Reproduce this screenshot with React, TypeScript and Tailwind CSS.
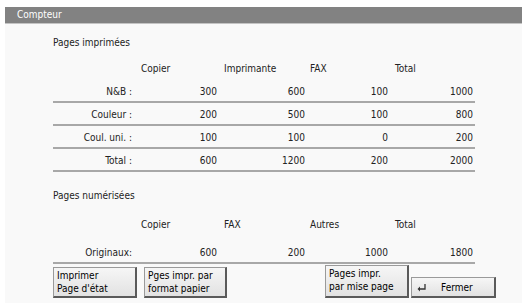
import React from 'react';

const font = { fontFamily: '"DejaVu Sans Condensed", "Liberation Sans", sans-serif' };

const printed = [
  ['N&B :', '300', '600', '100', '1000'],
  ['Couleur :', '200', '500', '100', '800'],
  ['Coul. uni. :', '100', '100', '0', '200'],
  ['Total :', '600', '1200', '200', '2000'],
];

const scanned = [['Originaux:', '600', '200', '1000', '1800']];

const Header = ({ cols }: { cols: string[] }) => (
  <div className="grid grid-cols-[83px_86px_85px_1fr] ml-[88px] h-[14px] leading-[14px]">
    {cols.map(c => <div key={c}>{c}</div>)}
  </div>
);

const Rows = ({ rows }: { rows: string[][] }) => (
  <div className="w-[422px]">
    {rows.map(r => (
      <div key={r[0]} className="grid grid-cols-[80px_84px_88px_83px_87px] h-[23px] pt-[3px] leading-[18px] border-b-2 border-[#a8a8a8]">
        <div className="text-right pr-[1px]">{r[0]}</div>
        <div className="text-right">{r[1]}</div>
        <div className="text-right">{r[2]}</div>
        <div className="text-right">{r[3]}</div>
        <div className="text-right pr-[2px]">{r[4]}</div>
      </div>
    ))}
  </div>
);

const Btn = ({ className, children }: { className: string, children: React.ReactNode }) => (
  <div className={`border border-[#9a9a9a] border-r-2 border-b-2 border-r-[#5a5a5a] border-b-[#5a5a5a] bg-gradient-to-b from-[#f6f6f6] to-[#e2e2e2] text-black leading-[13px] pl-[3px] pt-[1px] ${className}`}>
    {children}
  </div>
);

export default function App() {
  return (
    <div className="w-[526px] h-[307px] bg-white pt-[7px] pl-[5px] text-[10px] text-[#222]" style={font}>
      <div className="w-[517px]">
        <div className="h-[16px] bg-[#828282] text-white leading-[16px] pl-[12px]">Compteur</div>
        <div className="h-px bg-[#c4c4c4]" />
        <div className="bg-[#f9f9f9] pl-[48px] pb-[5px] h-[279px]">
          <div className="pt-[12px] h-[26px] leading-[14px]">Pages imprimées</div>
          <div className="mt-[12px]"><Header cols={['Copier', 'Imprimante', 'FAX', 'Total']} /></div>
          <div className="mt-[4px]"><Rows rows={printed} /></div>
          <div className="mt-[17px] h-[14px] leading-[14px]">Pages numérisées</div>
          <div className="mt-[15px]"><Header cols={['Copier', 'FAX', 'Autres', 'Total']} /></div>
          <div className="mt-[9px]"><Rows rows={scanned} /></div>
          <div className="flex items-end h-[34px]">
            <Btn className="w-[84px] h-[31px]">Imprimer<br />Page d'état</Btn>
            <Btn className="ml-[7px] w-[83px] h-[31px]">Pges impr. par<br />format papier</Btn>
            <Btn className="ml-[98px] w-[84px] h-[33px]">Pages impr.<br />par mise page</Btn>
            <Btn className="ml-[2px] w-[85px] h-[21px] !pl-0 !pt-0 flex items-center">
              <svg width="12" height="9" viewBox="0 0 12 9" className="ml-[4px]">
                <path d="M9 1 V6 H3" fill="none" stroke="#333" strokeWidth="1.3" />
                <path d="M4 3.5 L1.5 6 L4 8.5 Z" fill="#333" />
              </svg>
              <span className="ml-[13px]">Fermer</span>
            </Btn>
          </div>
        </div>
      </div>
    </div>
  );
}
